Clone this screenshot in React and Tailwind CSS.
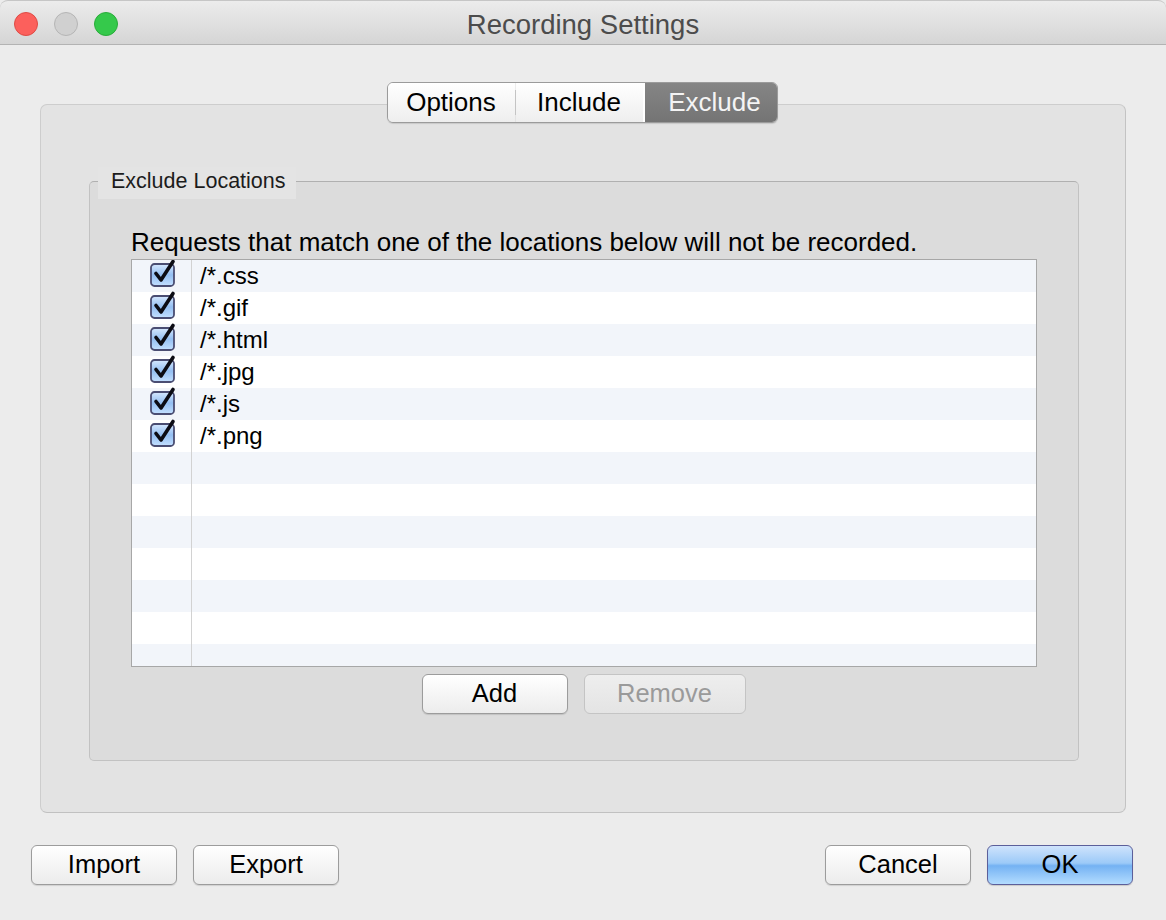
const LOCATIONS = ["/*.css", "/*.gif", "/*.html", "/*.jpg", "/*.js", "/*.png"];
const ROW_COUNT = 13;

function CheckBox() {
  return (
    <svg width="28" height="28" viewBox="0 0 28 28" className="block">
      <defs>
        <linearGradient id="cbfill" x1="0" y1="0" x2="0" y2="1">
          <stop offset="0" stopColor="#d6e8fe" />
          <stop offset="0.5" stopColor="#94bff2" />
          <stop offset="1" stopColor="#c4e0ff" />
        </linearGradient>
      </defs>
      <rect x="2" y="5" width="23" height="22" rx="3.5" fill="url(#cbfill)" stroke="#4a4d72" strokeWidth="1.8" />
      <path d="M7 14.5 L12 21 L24 2.5" fill="none" stroke="#0c0c14" strokeWidth="3.6" strokeLinecap="round" strokeLinejoin="round" />
    </svg>
  );
}

function Button({ children, disabled, primary, className = "" }) {
  let look =
    "border-[#9c9c9c] bg-gradient-to-b from-white to-[#ececec] text-black shadow-[0_1px_1px_rgba(0,0,0,0.12)]";
  if (disabled) look = "border-[#c4c4c4] bg-gradient-to-b from-[#eeeeee] to-[#e4e4e4] text-[#9a9a9a]";
  if (primary)
    look =
      "border-[#5c5f9a] bg-[linear-gradient(#cfe3fc,#9ccaf8_45%,#74b2f3_52%,#b3dcff)] text-black shadow-[0_1px_1px_rgba(0,0,0,0.15)]";
  return (
    <button
      className={`h-[40px] rounded-[6px] border flex items-center justify-center text-[25.5px] leading-none ${look} ${className}`}
    >
      {children}
    </button>
  );
}

export default function App() {
  return (
    <div
      className="w-[1166px] h-[920px] bg-[#ececec] flex flex-col overflow-hidden"
      style={{ fontFamily: '"Liberation Sans", Arial, sans-serif' }}
    >
      {/* title bar */}
      <div className="h-[45px] shrink-0 rounded-t-[8px] border-t border-[#c6c6c6] border-b border-b-[#b3b3b3] bg-gradient-to-b from-[#ececec] to-[#d5d5d5] relative flex items-center justify-center">
        <div className="absolute left-[14px] top-[11px] flex gap-[16px]">
          <span className="w-[24px] h-[24px] rounded-full bg-[#fc605c] border border-[#de4b45]" />
          <span className="w-[24px] h-[24px] rounded-full bg-[#d0d0d0] border border-[#b5b5b5]" />
          <span className="w-[24px] h-[24px] rounded-full bg-[#35c94b] border border-[#29ac3a]" />
        </div>
        <span className="text-[27.5px] text-[#4c4c4c] mt-[4px]">Recording Settings</span>
      </div>

      {/* segmented tabs */}
      <div className="mt-[37px] h-[41px] flex justify-center relative z-10">
        <div className="flex h-[41px] ml-[-2px] rounded-[6px] border border-[#9b9b9b] shadow-[0_1px_1px_rgba(0,0,0,0.12)] overflow-hidden text-[26px]">
          <div className="w-[127px] flex items-center justify-center bg-gradient-to-b from-white to-[#eeeeee] text-black">
            Options
          </div>
          <div className="w-px my-[7px] bg-[#c4c4c4]" />
          <div className="w-[127px] flex items-center justify-center bg-gradient-to-b from-white to-[#eeeeee] text-black">
            Include
          </div>
          <div className="w-[2px] bg-white" />
          <div className="w-[132px] flex items-center justify-center bg-gradient-to-b from-[#858585] to-[#747474] text-[#f4f4f4] pl-[8px]">
            Exclude
          </div>
        </div>
      </div>

      {/* tab panel */}
      <div className="-mt-[19px] mx-[40px] h-[709px] shrink-0 rounded-[7px] border border-[#cdcdcd] border-r-[#c3c3c3] border-b-[#c1c1c1] bg-[#e3e3e3] pt-[76px] pl-[48px] pr-[46px]">
        {/* group box */}
        <div className="relative h-[580px] rounded-[5px] border border-[#c2c2c2] border-t-[#b0b0b0] bg-[#dcdcdc] pl-[41px] pr-[41px] pt-[46px]">
          <div className="absolute left-[8px] -top-[15px] w-[198px] h-[32px] bg-[#e4e4e4] pl-[13px] flex items-start">
            <span className="text-[21.5px] leading-[28px] text-[#1c1c1c]">Exclude Locations</span>
          </div>

          <div className="h-[28px] text-[26px] leading-[28px] text-black mb-[3px] whitespace-nowrap">
            Requests that match one of the locations below will not be recorded.
          </div>

          <div className="h-[408px] border border-[#a7a7a7] bg-white overflow-hidden">
            {Array.from({ length: ROW_COUNT }).map((_, i) => {
              const loc = LOCATIONS[i];
              return (
                <div
                  key={i}
                  className={`h-[32px] flex ${i % 2 === 0 ? "bg-[#f2f5fa]" : "bg-white"}`}
                >
                  <div className="w-[60px] shrink-0 border-r border-[#d2d2d2] flex items-start justify-center pl-[2px] -mt-[1px]">
                    {loc && <CheckBox />}
                  </div>
                  <div className="flex-1 pl-[8px] text-[24px] leading-[32px] text-black">{loc}</div>
                </div>
              );
            })}
          </div>

          <div className="mt-[7px] flex justify-center gap-[16px] pr-[1px]">
            <Button className="w-[146px]">Add</Button>
            <Button disabled className="w-[162px]">Remove</Button>
          </div>
        </div>
      </div>

      {/* footer buttons */}
      <div className="mt-[32px] px-[31px] pr-[33px] flex justify-between">
        <div className="flex gap-[16px]">
          <Button className="w-[146px]">Import</Button>
          <Button className="w-[146px]">Export</Button>
        </div>
        <div className="flex gap-[16px]">
          <Button className="w-[146px]">Cancel</Button>
          <Button primary className="w-[146px]">OK</Button>
        </div>
      </div>
    </div>
  );
}
